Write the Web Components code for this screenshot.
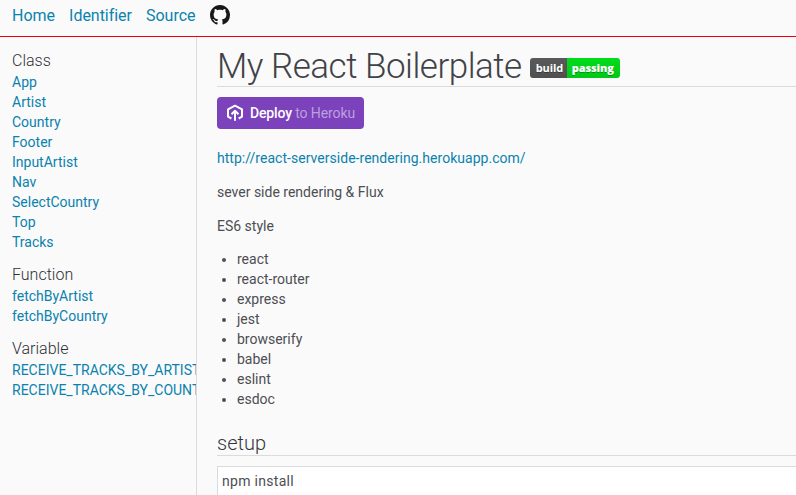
<!DOCTYPE html>
<html lang="en"><head><meta charset="utf-8"><title>My React Boilerplate</title>
<style>
html,body{margin:0;height:100%}
body{background:#fafafa;color:#4d4e53;font:14px/20px Roboto,sans-serif;overflow:hidden}
</style></head><body>
<doc-app></doc-app>
<script>
const define=(name,css,html)=>customElements.define(name,class extends HTMLElement{
  constructor(){super();const t=document.createElement('template');t.innerHTML='<style>*{box-sizing:border-box}a{color:#0a82ae;text-decoration:none}'+css+'</style>'+html;
  this.attachShadow({mode:'open'}).append(t.content.cloneNode(true));}
});
define('site-header',`:host{display:flex;height:37px;flex:none;box-sizing:border-box;border-bottom:1px solid #ec0010;padding:5px 0 0 12px;font-size:16px;line-height:21px;gap:14px}
svg{width:20px;height:20px;display:block}`,
`<a href="#">Home</a><a href="#" style="letter-spacing:-.03px">Identifier</a><a href="#">Source</a>
<a href="#"><svg viewBox="0 0 16 16"><path fill="#191717" d="M8 0C3.58 0 0 3.58 0 8c0 3.54 2.29 6.53 5.47 7.59.4.07.55-.17.55-.38 0-.19-.01-.82-.01-1.49-2.01.37-2.53-.49-2.69-.94-.09-.23-.48-.94-.82-1.13-.28-.15-.68-.52-.01-.53.63-.01 1.08.58 1.23.82.72 1.21 1.87.87 2.33.66.07-.52.28-.87.51-1.07-1.78-.2-3.64-.89-3.64-3.95 0-.87.31-1.59.82-2.15-.08-.2-.36-1.02.08-2.12 0 0 .67-.21 2.2.82.64-.18 1.32-.27 2-.27s1.36.09 2 .27c1.53-1.04 2.2-.82 2.2-.82.44 1.1.16 1.92.08 2.12.51.56.82 1.27.82 2.15 0 3.07-1.87 3.75-3.65 3.95.29.25.54.73.54 1.48 0 1.07-.01 1.93-.01 2.2 0 .21.15.46.55.38A8.01 8.01 0 0 0 16 8c0-4.42-3.58-8-8-8z"/></svg></a>`);
define('nav-group',`:host{display:block;margin-bottom:12px}
h2{margin:0;font-size:16px;font-weight:300;line-height:22px;height:22px;color:#2f3035}div{display:flex;flex-direction:column}`,
`<h2><slot name="title"></slot></h2><div><slot></slot></div>`);
define('nav-link',`:host{display:block;white-space:nowrap;height:20px}a{display:block;line-height:20px}`,`<a href="#"><slot></slot></a>`);
define('side-nav',`:host{display:block;width:197px;flex:none;box-sizing:border-box;border-right:1px solid #dbdbdb;padding:13px 0 0 12px;overflow:hidden}`,
`<nav-group><span slot="title">Class</span>${['App','Artist','Country','Footer','InputArtist','Nav','SelectCountry','Top','Tracks'].map(x=>`<nav-link>${x}</nav-link>`).join('')}</nav-group>
<nav-group><span slot="title">Function</span><nav-link>fetchByArtist</nav-link><nav-link>fetchByCountry</nav-link></nav-group>
<nav-group><span slot="title">Variable</span><nav-link>RECEIVE_TRACKS_BY_ARTIST</nav-link><nav-link>RECEIVE_TRACKS_BY_COUNTRY</nav-link></nav-group>`);
define('build-badge',`:host{display:flex;width:90px;height:20px;border-radius:3px;overflow:hidden;color:#fff;font:700 11px/20px "Open Sans","DejaVu Sans",sans-serif;letter-spacing:-.1px;text-shadow:0 1px 0 rgba(1,1,1,.3)}
span{background:linear-gradient(#5a5a5a,#505050);width:37px;padding-left:6px}b{flex:1;background:linear-gradient(#00dc1b,#00c917);padding-left:5px}`,`<span>build</span><b>passing</b>`);
define('deploy-button',`:host{display:flex;width:147px;height:32px;border-radius:4px;background:#7b42bc;color:#fff;align-items:center;padding-left:9px;box-sizing:border-box;font-size:14px}
svg{width:18px;height:18px;margin-right:6px}b{font-weight:500;letter-spacing:-.15px}span{color:#bda0de;white-space:pre;letter-spacing:-.1px}`,
`<svg viewBox="0 0 18 18" fill="none" stroke="#fff" stroke-width="2" stroke-linejoin="round"><path d="M5.4 14.5 2 12.7V5.3L9 1.7l7 3.6v7.4l-3.4 1.8M9 16.7V7M5.5 10.2 9 6.7l3.5 3.5"/></svg><b>Deploy</b><span> to Heroku</span>`);
define('doc-content',`:host{display:block;flex:1;min-width:0;padding:9px 0 0 20px;box-sizing:border-box}
h1{display:flex;gap:8px;height:41px;margin:0;border-bottom:1px solid #dbdbdb;font-size:35px;font-weight:300;line-height:42px;white-space:nowrap;color:#414247}
h1 span{letter-spacing:-.49px}
build-badge{margin-top:12px}deploy-button{margin-top:10px}
p{margin:0 0 14px}.first{margin-top:19px;letter-spacing:.03px}
ul{margin:-1px 0 0;padding:0 0 0 20px}h2{margin:23px 0 10px;height:24px;border-bottom:1px solid #dbdbdb;font-size:20px;font-weight:300;line-height:22px;color:#35363b}
pre{margin:0;height:80px;background:#fff;border:1px solid #dbdbdb;border-right:0;padding:4px;font:14px/20px Roboto,sans-serif;letter-spacing:.3px}`,
`<h1><span>My React Boilerplate</span><build-badge></build-badge></h1><deploy-button></deploy-button>
<p class="first"><a href="#">http://react-serverside-rendering.herokuapp.com/</a></p><p>sever side rendering &amp; Flux</p><p>ES6 style</p>
<ul>${['react','react-router','express','jest','browserify','babel','eslint','esdoc'].map(x=>`<li>${x}</li>`).join('')}</ul>
<h2>setup</h2><pre>npm install</pre>`);
define('doc-app',`:host{display:flex;flex-direction:column;height:100vh;overflow:hidden}main{display:flex;flex:1;min-height:0;overflow:hidden}`,
`<site-header></site-header><main><side-nav></side-nav><doc-content></doc-content></main>`);
</script></body></html>
